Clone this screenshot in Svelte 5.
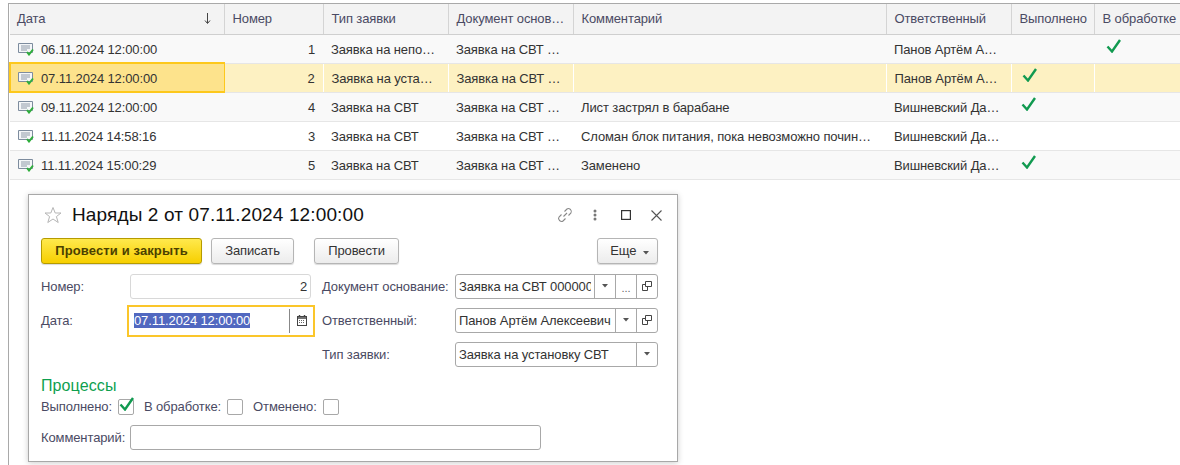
<script>
    const rows = [
        { date: '06.11.2024 12:00:00', num: 1, type: 'Заявка на непо…', doc: 'Заявка на СВТ …', note: '', who: 'Панов Артём А…', done: false, work: true },
        { date: '07.11.2024 12:00:00', num: 2, type: 'Заявка на уста…', doc: 'Заявка на СВТ …', note: '', who: 'Панов Артём А…', done: true, work: false, active: true },
        { date: '09.11.2024 12:00:00', num: 4, type: 'Заявка на СВТ', doc: 'Заявка на СВТ …', note: 'Лист застрял в барабане', who: 'Вишневский Да…', done: true, work: false },
        { date: '11.11.2024 14:58:16', num: 3, type: 'Заявка на СВТ', doc: 'Заявка на СВТ …', note: 'Сломан блок питания, пока невозможно почин…', who: 'Вишневский Да…', done: false, work: false },
        { date: '11.11.2024 15:00:29', num: 5, type: 'Заявка на СВТ', doc: 'Заявка на СВТ …', note: 'Заменено', who: 'Вишневский Да…', done: true, work: false }
    ];
</script>

{#snippet check()}
    <svg class="check" width="16" height="14" viewBox="0 0 16 14"><path d="M1.5 7.5 L6 12.5 L14 1" fill="none" stroke="#119a50" stroke-width="2.4"/></svg>
{/snippet}

{#snippet arrow()}
    <svg width="6" height="4" viewBox="0 0 6 4"><path d="M0 0 H6 L3 3.5 Z" fill="#555"/></svg>
{/snippet}

{#snippet open()}
    <svg width="10" height="10" viewBox="0 0 10 10"><path d="M3.5 .5 H9.5 V5.5 H3.5 Z M3.5 3.5 H.5 V9.5 H5.5 V6" fill="none" stroke="#444"/></svg>
{/snippet}

<div class="page">
    <div class="list">
        <table>
            <colgroup>
                <col style="width:214px" />
                <col style="width:99px" />
                <col style="width:125px" />
                <col style="width:125px" />
                <col style="width:313px" />
                <col style="width:125px" />
                <col style="width:83px" />
                <col />
            </colgroup>
            <thead>
                <tr>
                    <th><div class="sorted"><span>Дата</span><svg width="7" height="11" viewBox="0 0 7 11"><path d="M3.5 0 V10 M1 7.5 L3.5 10.5 L6 7.5" fill="none" stroke="#444"/></svg></div></th>
                    <th>Номер</th>
                    <th>Тип заявки</th>
                    <th>Документ основ…</th>
                    <th>Комментарий</th>
                    <th>Ответственный</th>
                    <th>Выполнено</th>
                    <th>В обработке</th>
                </tr>
            </thead>
            <tbody>
                {#each rows as row, i}
                    <tr class:active={row.active} class:odd={i % 2 === 0}>
                        <td class="date" class:focus={row.active}>
                            <div class="date-cell">
                                <svg width="16" height="13" viewBox="0 0 16 13">
                                    <path d="M.5 .5 H14.5 V9.5 H.5 Z" fill="#f4f6f8" stroke="#7d8c9e"/>
                                    <path d="M3 3 H12 M3 5 H12 M3 7 H9" stroke="#8f9aa8"/>
                                    <path d="M9 9 L11 11.5 L15 6.5" fill="none" stroke="#2fae3c" stroke-width="2"/>
                                </svg>
                                <span>{row.date}</span>
                            </div>
                        </td>
                        <td class="num">{row.num}</td>
                        <td>{row.type}</td>
                        <td>{row.doc}</td>
                        <td>{row.note}</td>
                        <td>{row.who}</td>
                        <td class="mark">{#if row.done}{@render check()}{/if}</td>
                        <td class="mark last">{#if row.work}{@render check()}{/if}</td>
                    </tr>
                {/each}
            </tbody>
        </table>
    </div>

    <div class="window">
        <div class="title-bar">
            <svg class="star" width="18" height="18" viewBox="0 0 18 18"><path d="M9 1.5 L11.2 7 H17 L12.4 10.6 L14.2 16.5 L9 13 L3.8 16.5 L5.6 10.6 L1 7 H6.8 Z" fill="none" stroke="#b5b5b5"/></svg>
            <h1>Наряды 2 от 07.11.2024 12:00:00</h1>
            <div class="win-tools">
                <svg class="t-link" width="16" height="16" viewBox="0 0 16 16"><g fill="none" stroke="#888" stroke-width="1.1"><path d="M6.5 9.5 L10 6"/><path d="M7.5 4.5 L10 2 Q11.5 .8 13.5 2.5 Q15.2 4.5 14 6 L11.5 8.5"/><path d="M8.5 11.5 L6 14 Q4.5 15.2 2.5 13.5 Q.8 11.5 2 10 L4.5 7.5"/></g></svg>
                <svg class="t-dots" width="4" height="12" viewBox="0 0 4 12"><g fill="#777"><circle cx="2" cy="2" r="1.5"/><circle cx="2" cy="6" r="1.5"/><circle cx="2" cy="10" r="1.5"/></g></svg>
                <svg class="t-max" width="10" height="10" viewBox="0 0 10 10"><rect x=".6" y=".6" width="8.8" height="8.8" fill="none" stroke="#333" stroke-width="1.2"/></svg>
                <svg class="t-close" width="11" height="11" viewBox="0 0 11 11"><path d="M.5 .5 L10.5 10.5 M10.5 .5 L.5 10.5" stroke="#555" stroke-width="1.1"/></svg>
            </div>
        </div>

        <div class="toolbar">
            <button class="primary">Провести и закрыть</button>
            <button class="write">Записать</button>
            <button class="post">Провести</button>
            <button class="more">Еще {@render arrow()}</button>
        </div>

        <div class="fields">
            <div class="col-left">
                <div class="field">
                    <span class="label">Номер:</span>
                    <div class="box num-box">2</div>
                </div>
                <div class="field date-field">
                    <span class="label">Дата:</span>
                    <div class="date-box">
                        <span class="value"><span class="selected">07.11.2024 12:00:00</span></span>
                        <span class="cal">
                            <svg width="10" height="11" viewBox="0 0 10 11"><path d="M2.5 0 V2 M7.5 0 V2" stroke="#444" stroke-width="1.4"/><rect x=".5" y="1.5" width="9" height="9" fill="none" stroke="#444"/><path d="M1 3 H9" stroke="#444" stroke-width="1.5"/><path d="M2 5.5 H8 M2 7.5 H8" stroke="#666" stroke-dasharray="1 1"/></svg>
                        </span>
                    </div>
                </div>
            </div>
            <div class="col-right">
                <div class="field">
                    <span class="label wide">Документ основание:</span>
                    <div class="box select">
                        <span class="value">Заявка на СВТ 000000</span>
                        <span class="btn">{@render arrow()}</span>
                        <span class="btn dots">...</span>
                        <span class="btn">{@render open()}</span>
                    </div>
                </div>
                <div class="field">
                    <span class="label wide">Ответственный:</span>
                    <div class="box select">
                        <span class="value">Панов Артём Алексеевич</span>
                        <span class="btn">{@render arrow()}</span>
                        <span class="btn">{@render open()}</span>
                    </div>
                </div>
                <div class="field">
                    <span class="label wide">Тип заявки:</span>
                    <div class="box select">
                        <span class="value">Заявка на установку СВТ</span>
                        <span class="btn">{@render arrow()}</span>
                    </div>
                </div>
            </div>
        </div>

        <h2>Процессы</h2>
        <div class="flags">
            <span class="label">Выполнено:</span>
            <span class="flag">{@render check()}</span>
            <span class="label">В обработке:</span>
            <span class="flag"></span>
            <span class="label">Отменено:</span>
            <span class="flag"></span>
        </div>
        <div class="field comment">
            <span class="label">Комментарий:</span>
            <div class="box comment-box"></div>
        </div>
    </div>
</div>

<style>
    :global(body) {
        margin: 0;
        background: #fff;
    }

    .page {
        height: 462px;
        margin: 3px 0 0 8px;
        border-left: 1px solid #a9a9a9;
        overflow: hidden;
        font-family: "Liberation Sans", Arial, sans-serif;
        font-size: 13px;
        letter-spacing: -0.11px;
        color: #333;
    }

    .list {
        border-top: 1px solid #a9a9a9;
    }

    table {
        width: 1171px;
        table-layout: fixed;
        border-collapse: collapse;
    }

    th {
        height: 30px;
        padding: 0 8px;
        background: #f3f3f3;
        border-right: 1px solid #d4d4d4;
        border-bottom: 1px solid #cfcfcf;
        box-sizing: border-box;
        font-weight: normal;
        text-align: left;
        color: #4a4a63;
        white-space: nowrap;
        overflow: hidden;
    }

    th:first-child {
        padding-left: 7px;
    }

    th:last-child {
        border-right: none;
    }

    .sorted {
        display: flex;
        justify-content: space-between;
        align-items: center;
        padding-right: 5px;
    }

    td {
        height: 29px;
        padding: 2px 8px 0;
        box-sizing: border-box;
        border-bottom: 1px solid #e6e6e6;
        white-space: nowrap;
        overflow: hidden;
    }

    tr.odd td {
        background: #f9f9f9;
    }

    tr.active td {
        background: #fdf1c2;
        border-right: 1px solid #fff;
    }

    tr.active td:last-child {
        border-right: none;
    }

    tr.active td.focus {
        background: #fde38c;
        border: 2px solid #fdc81c;
        border-right-width: 1px;
        padding-left: 7px;
    }

    .date {
        padding-left: 8px;
    }

    .date-cell {
        display: flex;
        align-items: center;
        gap: 7px;
    }

    .num {
        text-align: right;
    }

    .mark {
        padding-left: 10px;
        vertical-align: top;
        padding-top: 4px;
        line-height: 0;
    }

    .mark.last {
        padding-left: 12px;
    }

    .check {
        display: block;
    }

    .window {
        width: 650px;
        height: 268px;
        margin: 14px 0 0 19px;
        box-sizing: border-box;
        padding: 0 19px 0 12px;
        border: 1px solid #a8a8a8;
        box-shadow: 0 1px 6px rgba(0, 0, 0, 0.2);
        background: #fff;
    }

    .title-bar {
        display: flex;
        align-items: center;
        height: 41px;
        padding: 0 0 0 3px;
    }

    .star {
        margin-right: 10px;
    }

    h1 {
        margin: 0;
        font-size: 19px;
        font-weight: normal;
        letter-spacing: 0.13px;
        color: #111;
    }

    .win-tools {
        display: flex;
        align-items: center;
        margin-left: auto;
        margin-right: -4px;
    }

    .t-dots {
        margin-left: 20px;
    }

    .t-max {
        margin-left: 24px;
    }

    .t-close {
        margin-left: 20px;
    }

    .toolbar {
        display: flex;
        margin-top: 2px;
        height: 26px;
    }

    button {
        height: 26px;
        padding: 0;
        font: inherit;
        letter-spacing: inherit;
        color: #333;
        border: 1px solid #b5b5b5;
        border-radius: 3px;
        background: linear-gradient(#fff, #ececec);
        box-shadow: 0 1px 1px rgba(0, 0, 0, 0.15);
    }

    .primary {
        width: 161px;
        font-weight: bold;
        letter-spacing: 0.12px;
        border-color: #b59b00;
        background: linear-gradient(#ffe94d, #f7cf00);
        color: #4b4000;
    }

    .write {
        width: 83px;
        margin-left: 9px;
    }

    .post {
        width: 85px;
        margin-left: 20px;
    }

    .more {
        width: 61px;
        margin-left: auto;
        padding-left: 4px;
    }

    .more :global(svg) {
        margin-left: 3px;
    }

    .fields {
        display: flex;
        margin-top: 10px;
    }

    .col-left {
        width: 282px;
    }

    .field {
        display: flex;
        align-items: center;
        height: 25px;
        margin-bottom: 9px;
    }

    .label {
        color: #4a4a63;
        white-space: nowrap;
    }

    .col-left .label,
    .comment .label {
        width: 89px;
        flex: none;
    }

    .wide {
        width: 133px;
    }

    .box {
        height: 25px;
        box-sizing: border-box;
        border: 1px solid #d8d8d8;
        border-radius: 3px;
        display: flex;
        align-items: center;
        background: #fff;
    }

    .num-box {
        width: 181px;
        justify-content: flex-end;
        padding-right: 3px;
    }

    .date-field {
        margin: -3px 0 0;
        height: 32px;
    }

    .date-box {
        width: 188px;
        height: 32px;
        margin-left: -3px;
        box-sizing: border-box;
        border: 2px solid #fbc62a;
        display: flex;
        align-items: center;
        padding-left: 5px;
    }

    .date-box .value {
        flex: 1;
    }

    .selected {
        background: #5168c0;
        color: #fff;
    }

    .cal {
        width: 23px;
        height: 24px;
        border-left: 1px solid #888;
        display: flex;
        align-items: center;
        justify-content: center;
    }

    .select {
        width: 203px;
        border-color: #a8a8a8;
    }

    .select .value {
        flex: 1;
        min-width: 0;
        overflow: hidden;
        white-space: nowrap;
        margin: 0 3px;
    }

    .btn {
        flex: none;
        box-sizing: border-box;
        width: 21px;
        height: 100%;
        border-left: 1px solid #a8a8a8;
        display: flex;
        align-items: center;
        justify-content: center;
    }

    .dots {
        color: #666;
        font-size: 11px;
        padding-top: 3px;
    }

    h2 {
        margin: 1px 0 0;
        font-size: 16px;
        line-height: 18px;
        font-weight: normal;
        letter-spacing: 0.1px;
        color: #0e9f4f;
    }

    .flags {
        display: flex;
        align-items: center;
        height: 18px;
        margin-top: 3px;
    }

    .flag {
        width: 14px;
        height: 14px;
        margin: 0 10px 0 6px;
        border: 1px solid #a8a8a8;
        border-radius: 2px;
        display: block;
    }

    .flag :global(svg) {
        margin-top: -3px;
    }

    .comment {
        margin: 9px 0 0;
    }

    .comment-box {
        width: 411px;
        border-color: #a8a8a8;
    }
</style>
